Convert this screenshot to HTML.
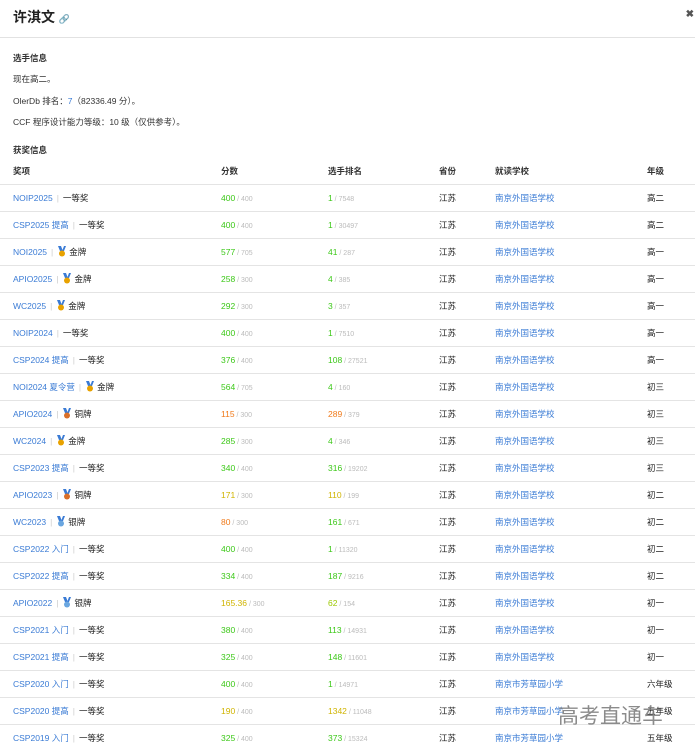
<!DOCTYPE html>
<html><head><meta charset="utf-8"><style>
body{margin:0;width:695px;height:753px;overflow:hidden;background:#fff;font-family:"Liberation Sans","Noto Sans CJK SC",sans-serif;color:#222;font-size:9px;position:relative}
.t{position:absolute;left:13px;top:7px;font-size:14px;font-weight:bold;color:#222}
.x{position:absolute;right:1px;top:9px;font-size:10px;font-weight:bold;color:#555}
.hl{position:absolute;left:0;right:0;top:37px;border-top:1px solid #e2e2e2}
.p{position:absolute;left:13px;font-size:8.5px;color:#333}
.b{font-weight:bold}
.row{position:absolute;left:0;right:0;height:27px;border-top:1px solid #e4e4e4}
.c{position:absolute;top:0;line-height:26px;white-space:nowrap;font-size:8.5px}
a{color:#3a7bd5;text-decoration:none}
.s{color:#ccc;margin:0 4px}
.g{color:#3cc818}.y{color:#d0b400}.o{color:#f07a1a}.yg{color:#9cc800}
.d{color:#bbb;font-size:7px}
svg{vertical-align:-2px;margin-right:2px}
.wm{position:absolute;left:558px;top:700px;font-size:21px;color:#777;opacity:.85}
</style></head><body>
<div class="t">许淇文 <span style="font-size:9px;color:#777;font-weight:normal">🔗</span></div>
<div class="x">✖</div>
<div class="hl"></div>
<div class="p b" style="top:52px">选手信息</div>
<div class="p" style="top:73px">现在高二。</div>
<div class="p" style="top:95px">OlerDb 排名：<a>7</a>（82336.49 分）。</div>
<div class="p" style="top:116px">CCF 程序设计能力等级：10 级（仅供参考）。</div>
<div class="p b" style="top:144px">获奖信息</div>
<div class="p b" style="top:165px">奖项</div>
<div class="p b" style="top:165px;left:221px">分数</div>
<div class="p b" style="top:165px;left:328px">选手排名</div>
<div class="p b" style="top:165px;left:439px">省份</div>
<div class="p b" style="top:165px;left:495px">就读学校</div>
<div class="p b" style="top:165px;left:647px">年级</div>
<div id="rows"></div>
<div class="wm">高考直通车</div>
<script>
var M={g:'#e8a200',s:'#6aa6e0',b:'#d9702a'};
function med(k){return '<svg width="10" height="11" viewBox="0 0 10 11"><path d="M1 0h3l1.5 4L7 0h2L7 5H3z" fill="#3a7bd5"/><circle cx="5" cy="7.5" r="3" fill="'+M[k]+'"/></svg>';}
var R=[
['NOIP2025','一等奖','g',400,400,'g',1,7548,0,'高二'],
['CSP2025 提高','一等奖','g',400,400,'g',1,30497,0,'高二'],
['NOI2025','g金牌','g',577,705,'g',41,287,0,'高一'],
['APIO2025','g金牌','g',258,300,'g',4,385,0,'高一'],
['WC2025','g金牌','g',292,300,'g',3,357,0,'高一'],
['NOIP2024','一等奖','g',400,400,'g',1,7510,0,'高一'],
['CSP2024 提高','一等奖','g',376,400,'g',108,27521,0,'高一'],
['NOI2024 夏令营','g金牌','g',564,705,'g',4,160,0,'初三'],
['APIO2024','b铜牌','o',115,300,'o',289,379,0,'初三'],
['WC2024','g金牌','g',285,300,'g',4,346,0,'初三'],
['CSP2023 提高','一等奖','g',340,400,'g',316,19202,0,'初三'],
['APIO2023','b铜牌','y',171,300,'y',110,199,0,'初二'],
['WC2023','s银牌','o',80,300,'g',161,671,0,'初二'],
['CSP2022 入门','一等奖','g',400,400,'g',1,11320,0,'初二'],
['CSP2022 提高','一等奖','g',334,400,'g',187,9216,0,'初二'],
['APIO2022','s银牌','y','165.36',300,'yg',62,154,0,'初一'],
['CSP2021 入门','一等奖','g',380,400,'g',113,14931,0,'初一'],
['CSP2021 提高','一等奖','g',325,400,'g',148,11601,0,'初一'],
['CSP2020 入门','一等奖','g',400,400,'g',1,14971,1,'六年级'],
['CSP2020 提高','一等奖','y',190,400,'y',1342,11048,1,'五年级'],
['CSP2019 入门','一等奖','g',325,400,'g',373,15324,1,'五年级']];
var h='';
R.forEach(function(r,i){
var aw=r[1];var m=aw.charAt(0);
if(m=='g'||m=='s'||m=='b')aw=med(m)+aw.slice(1);
h+='<div class="row" style="top:'+(184+27*i)+'px">'+
'<div class="c" style="left:13px"><a>'+r[0]+'</a><span class="s">|</span>'+aw+'</div>'+
'<div class="c" style="left:221px"><span class="'+r[2]+'">'+r[3]+'</span><span class="d"> / '+r[4]+'</span></div>'+
'<div class="c" style="left:328px"><span class="'+r[5]+'">'+r[6]+'</span><span class="d"> / '+r[7]+'</span></div>'+
'<div class="c" style="left:439px">江苏</div>'+
'<div class="c" style="left:495px"><a>'+(r[8]?'南京市芳草园小学':'南京外国语学校')+'</a></div>'+
'<div class="c" style="left:647px">'+r[9]+'</div></div>';});
document.getElementById('rows').innerHTML=h;
</script>
</body></html>
